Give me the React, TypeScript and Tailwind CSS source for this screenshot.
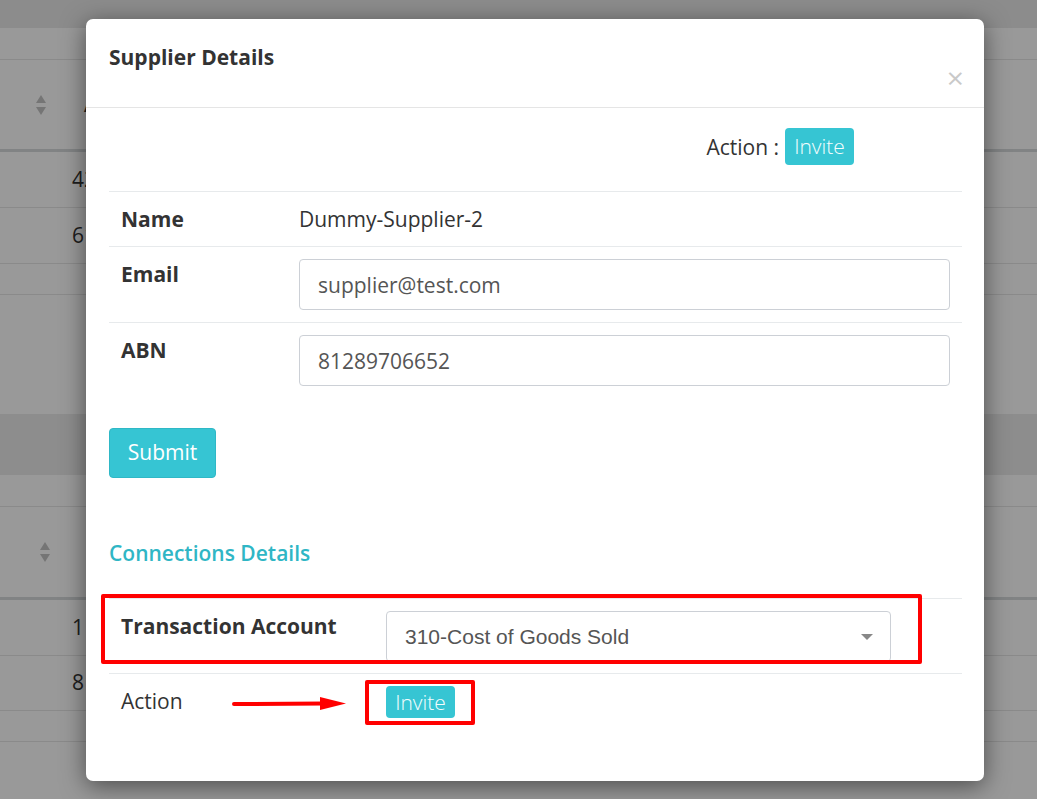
import React from 'react'

function SortIcon() {
  return (
    <svg width="12" height="22" viewBox="0 0 12 22" className="fill-[#c4c4c4]">
      <path d="M6 1 L11 9 H1 Z" />
      <path d="M6 21 L11 13 H1 Z" />
    </svg>
  )
}

function BgRow({ h, text, thick }: { h: string; text?: string; thick?: boolean }) {
  return (
    <div className={`${h} flex items-center border-b ${thick ? 'border-b-[3px] border-[#d7dadd]' : 'border-[#e6e6e6]'}`}>
      {text && <span className="ml-[72px] text-[21px] text-[#333]">{text}</span>}
    </div>
  )
}

function Badge({ size }: { size: 'lg' | 'sm' }) {
  return (
    <span
      className={`inline-flex items-center justify-center rounded-[4px] bg-[#36c5d3] text-[#f4fdfe] font-light text-[21px] ${
        size === 'lg' ? 'w-[69px] h-[37px]' : 'w-[69px] h-[32px]'
      }`}
      style={{ fontFamily: '"Open Sans", sans-serif' }}
    >
      Invite
    </span>
  )
}

export default function App() {
  return (
    <div className="relative w-[1037px] h-[799px] overflow-hidden bg-white font-['Open_Sans',sans-serif] text-[#333]">
      {/* page behind the dialog */}
      <div className="flex flex-col">
        <div className="h-[28px] bg-[#e9e9e9]" />
        <BgRow h="h-[32px]" />
        <div className="h-[92px] flex items-center border-b-[3px] border-[#d7dadd]">
          <span className="ml-[35px]"><SortIcon /></span>
          <span className="ml-[37px] text-[21px] font-bold">A</span>
        </div>
        <BgRow h="h-[56px]" text="42" />
        <BgRow h="h-[56px]" text="61" />
        <BgRow h="h-[31px]" />
        <div className="h-[119px]" />
        <div className="h-[61px] bg-[#ececec]" />
        <BgRow h="h-[32px]" />
        <div className="h-[93px] flex items-center border-b-[3px] border-[#d7dadd]">
          <span className="ml-[39px]"><SortIcon /></span>
        </div>
        <BgRow h="h-[56px]" text="1" />
        <BgRow h="h-[55px]" text="8" />
        <BgRow h="h-[31px]" />
      </div>

      {/* backdrop */}
      <div className="absolute inset-0 bg-black/40" />

      {/* dialog */}
      <div className="absolute left-[86px] top-[19px] w-[898px] h-[762px] rounded-[7px] bg-white shadow-[0_5px_25px_rgba(0,0,0,0.5)]">
        <div className="relative h-[89px] border-b border-[#e5e5e5] px-[23px] pt-[24px]">
          <h4 className="text-[21px] font-bold leading-[28px] text-[#333]">Supplier Details</h4>
          <span className="absolute right-[20px] top-[44px] text-[30px] leading-[30px] text-[#c9c9c9]">×</span>
        </div>

        <div className="relative pl-[23px] pr-[22px]">
          <div className="flex items-center justify-end gap-[6px] pt-[20px] pb-[26px] pr-[108px]">
            <span className="text-[21px] leading-[28px]">Action :</span>
            <Badge size="lg" />
          </div>

          <div className="border-t border-[#e7eaec] text-[21px] leading-[28px]">
            <div className="flex py-[13px]">
              <div className="w-[178px] pl-[12px] font-bold">Name</div>
              <div className="pl-[12px]">Dummy-Supplier-2</div>
            </div>
            <div className="flex border-t border-[#e7eaec] py-[12px]">
              <div className="w-[178px] pl-[12px] pt-[1px] font-bold">Email</div>
              <div className="flex-1 px-[12px]">
                <div className="h-[51px] flex items-center rounded-[4px] border border-[#ccd0d6] px-[18px] text-[#555]">supplier@test.com</div>
              </div>
            </div>
            <div className="flex border-t border-[#e7eaec] py-[12px]">
              <div className="w-[178px] pl-[12px] pt-[1px] font-bold">ABN</div>
              <div className="flex-1 px-[12px]">
                <div className="h-[51px] flex items-center rounded-[4px] border border-[#ccd0d6] px-[18px] text-[#555]">81289706652</div>
              </div>
            </div>
          </div>

          <button className="mt-[30px] h-[50px] w-[107px] rounded-[4px] border border-[#2fb8c6] bg-[#36c5d3] text-[21px] text-white">
            Submit
          </button>

          <h4 className="mt-[61px] text-[21px] font-semibold leading-[28px] text-[#2fb6c5]">Connections Details</h4>

          <div className="mt-[31px] border-t border-[#e7eaec] text-[21px] leading-[28px]">
            <div className="flex pt-[12px] pb-[11px]">
              <div className="w-[265px] pl-[12px] pt-[1px] font-bold">Transaction Account</div>
              <div className="pl-[12px]">
                <div
                  className="relative h-[51px] w-[505px] flex items-center rounded-[4px] border border-[#ccd0d6] px-[18px] text-[21px] text-[#555]"
                  style={{ fontFamily: '"Liberation Sans", Arial, sans-serif' }}
                >
                  310-Cost of Goods Sold
                  <span className="absolute right-[17px] top-[22px] h-0 w-0 border-x-[6px] border-t-[6px] border-x-transparent border-t-[#888]" />
                </div>
              </div>
            </div>
            <div className="flex items-start border-t border-[#e7eaec] pt-[12px]">
              <div className="w-[265px] pl-[12px] pt-[1px]">Action</div>
              <div className="pl-[12px]">
                <Badge size="sm" />
              </div>
            </div>
          </div>
        </div>

        {/* red annotations */}
        <div className="absolute left-[15px] top-[575px] w-[821px] h-[70px] rounded-[2px] border-[4px] border-[#ff0000]" />
        <div className="absolute left-[279px] top-[661px] w-[110px] h-[45px] rounded-[2px] border-[4px] border-[#ff0000]" />
        <svg className="absolute left-[146px] top-[676px]" width="116" height="18" viewBox="0 0 116 18">
          <path d="M2 9 L92 8.5" stroke="#ff0000" strokeWidth="4" strokeLinecap="round" />
          <path d="M88 2 L114 8.5 L88 15 Z" fill="#ff0000" />
        </svg>
      </div>
    </div>
  )
}
